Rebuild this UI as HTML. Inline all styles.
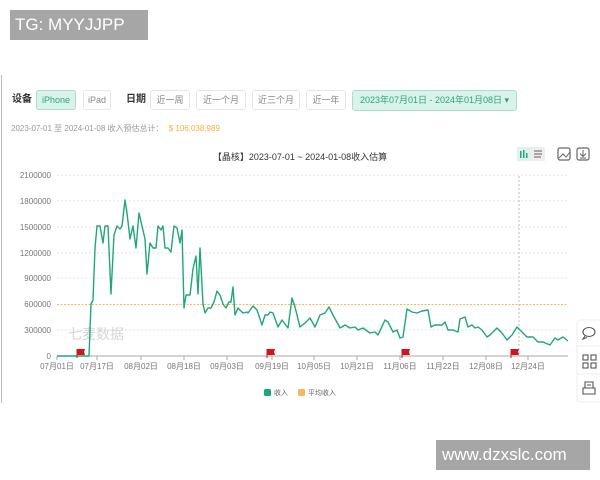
<!DOCTYPE html>
<html><head><meta charset="utf-8">
<style>
*{margin:0;padding:0;box-sizing:border-box}
body{width:600px;height:480px;background:#fff;position:relative;overflow:hidden;font-family:"Liberation Sans","Noto Sans CJK SC",sans-serif;color:#555}
.wm{position:absolute;background:#a6a6a6;color:#fff;font-size:17px;line-height:30px;padding-left:5px}
.lbl{position:absolute;font-size:10px;line-height:14px;font-weight:bold;color:#333;top:93px}
.btn{position:absolute;top:90px;height:20px;border:1px solid #e6e6e6;border-radius:3px;font-size:9px;line-height:18px;text-align:center;color:#888;background:#fff}
.on{background:#d9f3ea;border-color:#a9e0cc;color:#2aa47a}
</style></head><body>
<div class="wm" style="left:10px;top:10px;width:138px">TG: MYYJJPP</div>
<div class="wm" style="left:436px;top:440px;width:154px;padding-left:6px">www.dzxslc.com</div>
<div style="position:absolute;left:1px;top:75px;width:1px;height:328px;background:#bbb"></div>

<div class="lbl" style="left:12px">设备</div>
<div class="btn on" style="left:36px;width:40px">iPhone</div>
<div class="btn" style="left:83px;width:28px">iPad</div>
<div class="lbl" style="left:126px">日期</div>
<div class="btn" style="left:150px;width:40px">近一周</div>
<div class="btn" style="left:196px;width:50px">近一个月</div>
<div class="btn" style="left:252px;width:48px">近三个月</div>
<div class="btn" style="left:306px;width:40px">近一年</div>
<div class="btn on" style="left:352px;width:165px;height:21px">2023年07月01日 - 2024年01月08日 ▾</div>
<div style="position:absolute;left:11px;top:123px;font-size:8px;color:#999">2023-07-01 至 2024-01-08 收入预估总计： <span style="color:#f0b040;margin-left:3px">$ 106,038,989</span></div>
<div style="position:absolute;left:0;width:600px;top:150px;text-align:center;font-size:9px;color:#333">【晶核】2023-07-01 ~ 2024-01-08收入估算</div>

<svg width="600" height="480" style="position:absolute;left:0;top:0" font-family="Liberation Sans, Noto Sans CJK SC, sans-serif">
<rect x="517" y="147" width="14" height="14" fill="#dff3ec"/>
<g fill="#2aa47a"><rect x="520" y="151" width="1.5" height="7"/><rect x="523" y="150" width="1.5" height="8"/><rect x="526" y="153" width="1.5" height="5"/></g>
<rect x="531" y="147" width="14" height="14" fill="#eee"/>
<g stroke="#777" stroke-width="1.2"><line x1="534" y1="151" x2="542" y2="151"/><line x1="534" y1="154" x2="542" y2="154"/><line x1="534" y1="157" x2="541" y2="157"/></g>
<rect x="558" y="148" width="12" height="12" rx="2" fill="none" stroke="#666" stroke-width="1.2"/>
<path d="M559 158 L563 154 L566 157 L570 152" fill="none" stroke="#666"/>
<rect x="577" y="148" width="12" height="12" rx="2" fill="none" stroke="#666" stroke-width="1.2"/>
<path d="M583 150 V156 M580 153.5 L583 156.5 L586 153.5 M580 158 H586" fill="none" stroke="#666"/>
<g stroke="#e4e4e4" stroke-dasharray="2,2">
<line x1="57" y1="175" x2="568" y2="175"/><line x1="57" y1="201" x2="568" y2="201"/><line x1="57" y1="227" x2="568" y2="227"/><line x1="57" y1="253" x2="568" y2="253"/><line x1="57" y1="278" x2="568" y2="278"/><line x1="57" y1="330" x2="568" y2="330"/>
</g>
<line x1="57" y1="356" x2="568" y2="356" stroke="#aaa"/>
<g stroke="#aaa"><line x1="57" y1="356" x2="57" y2="360"/><line x1="97" y1="356" x2="97" y2="360"/><line x1="141" y1="356" x2="141" y2="360"/><line x1="184" y1="356" x2="184" y2="360"/><line x1="227" y1="356" x2="227" y2="360"/><line x1="272" y1="356" x2="272" y2="360"/><line x1="314" y1="356" x2="314" y2="360"/><line x1="357" y1="356" x2="357" y2="360"/><line x1="400" y1="356" x2="400" y2="360"/><line x1="443" y1="356" x2="443" y2="360"/><line x1="486" y1="356" x2="486" y2="360"/><line x1="528" y1="356" x2="528" y2="360"/></g>
<line x1="57" y1="304.5" x2="568" y2="304.5" stroke="#f3b860" stroke-dasharray="2,1.5"/>
<line x1="519" y1="176" x2="519" y2="356" stroke="#bbb" stroke-dasharray="2,2"/>
<g font-size="8" fill="#777" text-anchor="end">
<text x="51" y="178">2100000</text><text x="51" y="204">1800000</text><text x="51" y="230">1500000</text><text x="51" y="256">1200000</text><text x="51" y="281">900000</text><text x="51" y="307">600000</text><text x="51" y="333">300000</text><text x="51" y="359">0</text>
</g>
<g font-size="8" fill="#777" text-anchor="middle">
<text x="57" y="369">07月01日</text><text x="97" y="369">07月17日</text><text x="141" y="369">08月02日</text><text x="184" y="369">08月18日</text><text x="227" y="369">09月03日</text><text x="272" y="369">09月19日</text><text x="314" y="369">10月05日</text><text x="357" y="369">10月21日</text><text x="400" y="369">11月06日</text><text x="443" y="369">11月22日</text><text x="486" y="369">12月08日</text><text x="528" y="369">12月24日</text>
</g>
<text x="68" y="339" font-size="14" fill="#d5d5d5">七麦数据</text>
<polyline fill="none" stroke="#21a57c" stroke-width="1.4" stroke-linejoin="round" points="
57,356 88,356 89,356 91,304 93,300 95,248 97,226 100,226 103,243 105,226 108,226 111,294 114,235 117,226 120,229 122,226 125,200 127,213 130,239 133,226 136,248 139,213 142,226 145,239 147,274 150,243 153,248 156,248 158,226 161,230 163,226 165,248 168,248 171,252 174,226 177,228 180,243 182,230 184,308 186,295 190,295 193,269 196,256 198,294 200,248 203,304 205,313 208,308 211,308 214,302 217,291 220,295 223,304 226,308 229,302 231,302 233,287 235,315 238,308 243,313 247,312 248,313 253,306 257,310 262,325 265,315 268,315 270,312 273,313 278,327 282,320 288,328 292,298 295,307 300,327 305,323 310,318 315,327 320,315 325,313 329,307 333,315 340,328 345,325 350,328 355,327 358,330 363,328 370,333 375,332 378,335 385,320 388,322 393,332 397,330 400,338 403,337 407,309 412,312 417,313 422,311 428,310 431,327 435,325 442,325 445,322 448,330 453,330 458,332 460,319 465,317 468,327 472,325 475,328 478,327 482,330 487,337 490,335 497,328 502,333 507,340 512,335 517,327 520,330 527,337 533,337 538,342 543,342 550,345 555,338 558,340 563,337 568,341"/>
<g fill="#d0151f">
<path d="M77 349 h8 l-1 3 l1 3 h-8 z"/><path d="M267 349 h8 l-1 3 l1 3 h-8 z"/><path d="M402 349 h8 l-1 3 l1 3 h-8 z"/><path d="M511 349 h8 l-1 3 l1 3 h-8 z"/>
</g>
<g stroke="#d0151f" stroke-width="1"><line x1="77" y1="349" x2="77" y2="358"/><line x1="267" y1="349" x2="267" y2="358"/><line x1="402" y1="349" x2="402" y2="358"/><line x1="511" y1="349" x2="511" y2="358"/></g>
<rect x="264" y="389" width="7" height="7" rx="1.5" fill="#21a57c"/>
<text x="274" y="395" font-size="7" fill="#666">收入</text>
<rect x="298" y="389" width="7" height="7" rx="1.5" fill="#f3b860"/>
<text x="308" y="395" font-size="7" fill="#666">平均收入</text>
<rect x="577" y="320" width="30" height="82" rx="3" fill="#fff" stroke="#eee"/>
<line x1="577" y1="346" x2="600" y2="346" stroke="#eee"/><line x1="577" y1="374" x2="600" y2="374" stroke="#eee"/>
<g fill="none" stroke="#555" stroke-width="1.1">
<ellipse cx="589" cy="332" rx="6" ry="4.5"/><path d="M585 336 l-2 3 l4 -1.5"/>
<rect x="583" y="355" width="5" height="5"/><rect x="591" y="355" width="5" height="5"/><rect x="583" y="363" width="5" height="5"/><rect x="591" y="363" width="5" height="5"/>
<path d="M585 382 h8 v6 h-8 z M583 388 h12 v6 h-12 z M587 385 h4"/>
</g>
</svg>
</body></html>
